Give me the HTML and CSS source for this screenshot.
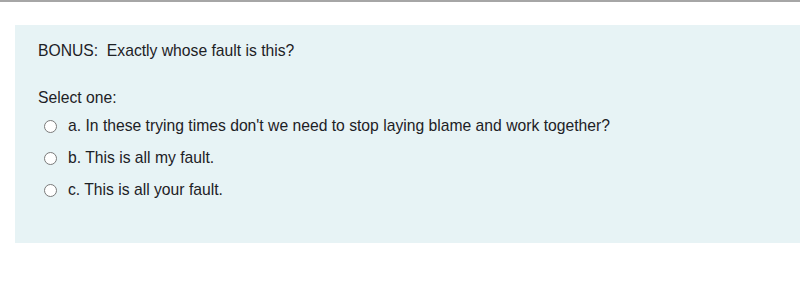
FILE: index.html
```html
<!DOCTYPE html>
<html>
<head>
<meta charset="utf-8">
<link rel="stylesheet" href="styles.css">
</head>
<body>
<div class="topline"></div>
<div class="que">
  <div class="qtext">BONUS:&nbsp; Exactly whose fault is this?</div>
  <div class="prompt">Select one:</div>
  <div class="answers">
    <label class="opt"><span class="radio"></span><span>a. In these trying times don't we need to stop laying blame and work together?</span></label>
    <label class="opt"><span class="radio"></span><span>b. This is all my fault.</span></label>
    <label class="opt"><span class="radio"></span><span>c. This is all your fault.</span></label>
  </div>
</div>
</body>
</html>
```
FILE: styles.css
```css
html, body {
  margin: 0;
  padding: 0;
  background: #ffffff;
}
body {
  font-family: "Liberation Sans", Arial, sans-serif;
  font-size: 15.7px;
  color: #1d2125;
}
.topline {
  height: 2px;
  background: #a6a6a6;
}
.que {
  margin: 23px 0 0 15px;
  background: #e7f3f5;
  height: 218px;
  box-sizing: border-box;
  padding: 16px 23px 0 23px;
}
.qtext {
  line-height: 20px;
}
.prompt {
  margin-top: 27px;
  line-height: 20px;
}
.answers {
  display: flex;
  flex-direction: column;
  gap: 12px;
  margin-top: 8px;
  padding-left: 6px;
}
.opt {
  display: flex;
  align-items: center;
  gap: 11px;
  line-height: 20px;
}
.radio {
  width: 11px;
  height: 11px;
  border: 1px solid #7a7a7a;
  border-radius: 50%;
  background: #ffffff;
  flex: none;
}
```
